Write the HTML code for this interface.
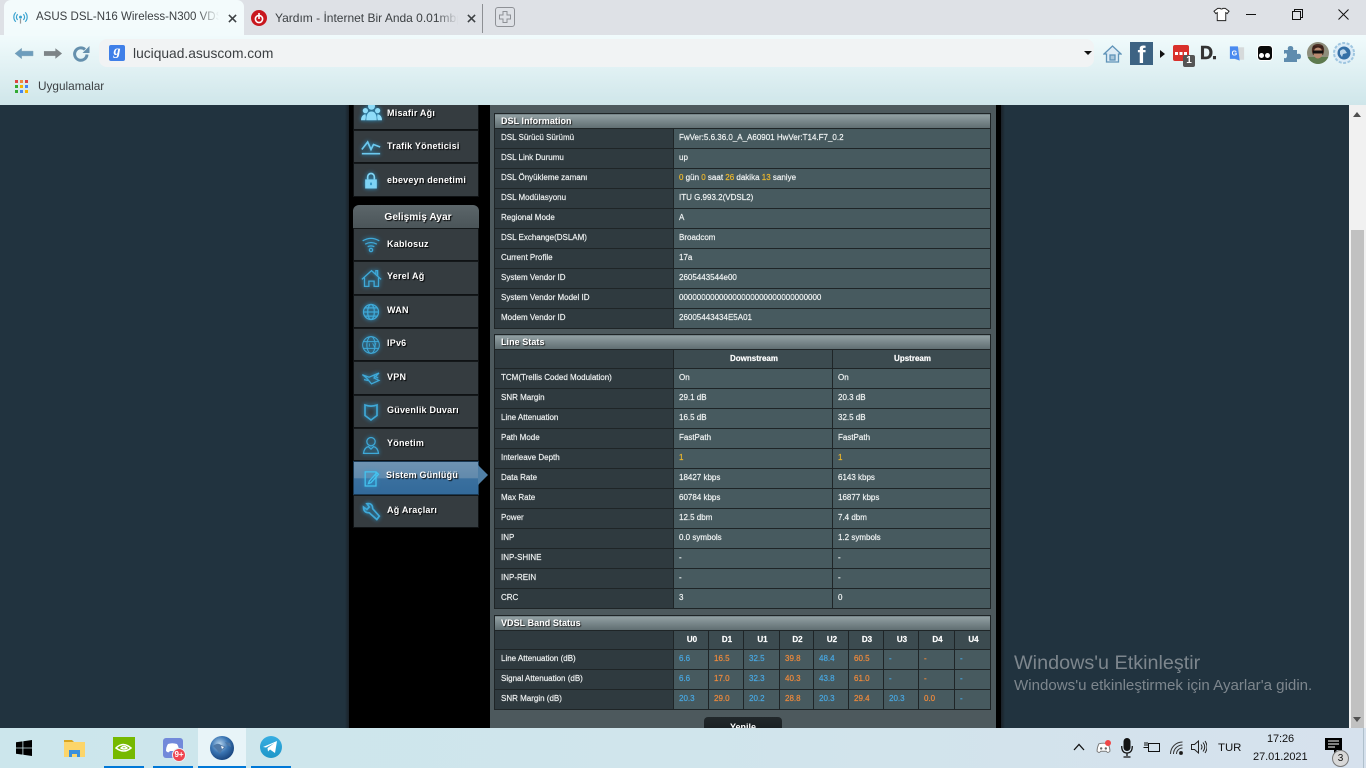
<!DOCTYPE html>
<html><head><meta charset="utf-8"><title>ASUS DSL-N16</title>
<style>
*{box-sizing:border-box}
html,body{margin:0;padding:0;width:1366px;height:768px;overflow:hidden;font-family:"Liberation Sans",sans-serif;background:#21333f}
.a{position:absolute}
.t{position:absolute;white-space:nowrap}
#tabs{left:0;top:0;width:1366px;height:35px;background:#dee1e6}
#tb{left:0;top:35px;width:1366px;height:70px;background:linear-gradient(#f1fbfc,#cfe6ea)}
#tab1{left:4px;top:0;width:240px;height:35px;background:#f3fbfc;border-radius:7px 7px 0 0}
.tabt{font-size:12px;color:#3c4043;top:11px;overflow:hidden;-webkit-mask-image:linear-gradient(90deg,#000 88%,transparent)}
#omni{left:99px;top:39px;width:995px;height:28px;background:#f1f3f4;border-radius:8px}
#black{left:349px;top:105px;width:652px;height:623px;background:#000}
#side{left:353px;top:105px;width:140px;height:423px;overflow:hidden}
.it{position:absolute;left:0;width:126px;background:#353c40;border:1px solid #0f1214;border-top:1px solid #14181a;color:#fff;font-size:9px;font-weight:bold;letter-spacing:.22px;text-shadow:1px 1px 1px #000}
.it span{position:absolute;left:33px;top:9px;white-space:nowrap}
.it svg{position:absolute;left:7px;top:6px;filter:drop-shadow(0 0 2px #2a9fd8)}
#main{left:490px;top:105px;width:506px;height:623px;background:#4d595d}
table{position:absolute;left:4px;width:497px;border-collapse:collapse;table-layout:fixed;font-size:8px;color:#f1f4f4;-webkit-text-stroke:.18px}
td,th{border:1px solid #1f2527;height:20px;padding:0 0 3px 5px;text-align:left;font-weight:normal;background:#475a5f;white-space:nowrap;overflow:hidden}
td.l,th.l{background:#2f3a3f;padding-left:6px;color:#eef1f1}
tr.h td,tr.h th{height:15px;background:linear-gradient(#93a1a4,#5e6c70);font-weight:bold;font-size:9px;color:#fff;letter-spacing:.05px;padding:0 0 0 6px;text-shadow:1px 1px 1px #222;-webkit-text-stroke:0}
tr.c th{height:19px;font-weight:bold;text-align:center;background:#3c4b50;padding:0 0 2px 2px;color:#fff}
tr.c th.l{background:#2f3a3f}
b.y{font-weight:normal;color:#f0b92b}
.bl{color:#48a8e2}.or{color:#ef8a3c}
#btn{left:214px;top:612px;width:78px;height:30px;background:linear-gradient(#22282b,#0b1315);border-radius:4px;color:#fff;font-size:9px;font-weight:bold;text-align:center;padding-top:5px}
#sb{left:1349px;top:105px;width:17px;height:623px;background:#f1f1f1}
#task{left:0;top:728px;width:1366px;height:40px;background:linear-gradient(90deg,#cce6ec,#d0e5ec 50%,#d6e1ed)}
.u{position:absolute;top:38px;height:2px;background:#0078d7}
.ic{position:absolute}
</style></head><body>

<div class="a" id="tabs"></div>
<div class="a" id="tab1"></div>
<div class="a" id="tb"></div>
<div class="a" style="left:4px;top:28px;width:240px;height:8px;background:#f2fbfc"></div>

<svg class="ic" style="left:13px;top:10px" width="15" height="16" viewBox="0 0 16 16" fill="none" stroke="#3aa3d0" stroke-width="1.3"><circle cx="8" cy="7" r="1.6" fill="#3aa3d0" stroke="none"/><path d="M5 4a4 4 0 0 0 0 6M11 4a4 4 0 0 1 0 6M3 2a7 7 0 0 0 0 10M13 2a7 7 0 0 1 0 10"/><path d="M8 9v5" stroke="#999"/></svg>
<div class="t tabt" style="left:36px;width:183px;font-size:11.5px;top:11px">ASUS DSL-N16 Wireless-N300 VDSL2 Modem</div>
<svg class="ic" style="left:228px;top:14px" width="9" height="9" viewBox="0 0 10 10" stroke="#3c4043" stroke-width="1.700"><path d="M1 1l8 8M9 1l-8 8"/></svg>
<svg class="ic" style="left:251px;top:10px" width="16" height="16" viewBox="0 0 16 16"><circle cx="8" cy="8" r="8" fill="#c8171e"/><circle cx="8" cy="9" r="3.600" fill="none" stroke="#fff" stroke-width="1.600"/><path d="M8 3v6" stroke="#fff" stroke-width="1.600"/></svg>
<div class="t tabt" style="left:275px;width:183px">Yardım - İnternet Bir Anda 0.01mbps</div>
<svg class="ic" style="left:467px;top:14px" width="9" height="9" viewBox="0 0 10 10" stroke="#3c4043" stroke-width="1.700"><path d="M1 1l8 8M9 1l-8 8"/></svg>
<div class="a" style="left:482px;top:4px;width:1px;height:29px;background:#8d9094"></div>
<svg class="ic" style="left:495px;top:7px" width="20" height="20" viewBox="0 0 20 20" fill="none" stroke="#8e9196"><rect x=".5" y=".5" width="19" height="19" rx="2.500"/><path d="M8 4.500h4v3.500h3.500v4H12v3.500H8V12H4.500V8H8z"/></svg>

<!-- window controls -->
<svg class="ic" style="left:1213px;top:7px" width="17" height="15" viewBox="0 0 18 15" fill="#fff" stroke="#222"><path d="M5 1h2.500q1.500 1.500 3 0H13l4 3-2 2.500-1.500-1V14h-9V5.500L3 6.500 1 4z"/></svg>
<div class="a" style="left:1246px;top:14px;width:10px;height:1px;background:#111"></div>
<svg class="ic" style="left:1292px;top:9px" width="11" height="11" viewBox="0 0 11 11" fill="none" stroke="#111"><rect x=".5" y="2.500" width="8" height="8"/><path d="M2.500 2.500v-2h8v8h-2"/></svg>
<svg class="ic" style="left:1338px;top:9px" width="11" height="11" viewBox="0 0 11 11" stroke="#111"><path d="M.5.500l10 10M10.500.500l-10 10"/></svg>

<!-- toolbar -->
<svg class="ic" style="left:14px;top:47px" width="20" height="13" viewBox="0 0 21 13"><path d="M1 6.500L8 1v3h12v5H8v3z" fill="#6d9dbd" stroke="#8ab" stroke-width=".5"/></svg>
<svg class="ic" style="left:43px;top:47px" width="20" height="13" viewBox="0 0 21 13"><path d="M20 6.500L13 1v3H1v5h12v3z" fill="#7d8487"/></svg>
<svg class="ic" style="left:72px;top:45px" width="18" height="18" viewBox="0 0 18 18" fill="none"><path d="M15 9.500a6.200 6.200 0 1 1-2-5" stroke="#6590ad" stroke-width="3"/><path d="M17.500 1v7h-7z" fill="#6590ad"/></svg>
<div class="a" id="omni"></div>
<div class="a" style="left:109px;top:45px;width:16px;height:16px;background:#3f7fe8;border-radius:2px;color:#fff;font:italic bold 14px 'Liberation Serif',serif;text-align:center;line-height:14px">g</div>
<div class="t" style="left:133px;top:46px;font-size:13.800px;color:#3c4043">luciquad.asuscom.com</div>
<div class="a" style="left:1084px;top:51px;border:4px solid transparent;border-top:4px solid #111;border-bottom:0"></div>
<svg class="ic" style="left:1103px;top:44px" width="19" height="19" viewBox="0 0 19 19" fill="#dcebf5" stroke="#5f93b8" stroke-width="1.300"><path d="M1 10L9.500 2 18 10h-2.500v8h-12v-8z"/><rect x="7" y="11" width="5" height="5" fill="#a9c6da"/></svg>
<div class="a" style="left:1130px;top:42px;width:23px;height:23px;background:#3d6383;color:#fff;font:bold 24px 'Liberation Sans',sans-serif;text-align:center;line-height:27px;overflow:hidden">f</div>
<div class="a" style="left:1160px;top:50px;border:4px solid transparent;border-left:5px solid #111;border-right:0"></div>
<div class="a" style="left:1173px;top:45px;width:16px;height:16px;background:#d9302b;border-radius:2px"></div>
<div class="a" style="left:1175px;top:52px;width:12px;height:3px;background:linear-gradient(90deg,#fff 0 3px,transparent 3px 4.500px,#fff 4.500px 7.500px,transparent 7.500px 9px,#fff 9px 12px)"></div>
<div class="a" style="left:1183px;top:55px;width:12px;height:12px;background:#555;border-radius:2px;color:#fff;font:bold 10px 'Liberation Sans',sans-serif;text-align:center;line-height:12px">1</div>
<div class="t" style="left:1200px;top:43px;font-size:18px;font-weight:bold;color:#333;letter-spacing:-1px;-webkit-text-stroke:.5px #333">D.</div>
<svg class="ic" style="left:1229px;top:45px" width="16" height="17" viewBox="0 0 18 18"><path d="M7 2h10v14H7z" fill="#d6dadb"/><path d="M1 1h9l2 16-5-2H1z" fill="#4a8af0"/><text x="3" y="11" font-size="8" font-weight="bold" fill="#fff" font-family="Liberation Sans">G</text></svg>
<div class="a" style="left:1258px;top:46px;width:14px;height:14px;background:#0a0a0a;border-radius:3px;box-shadow:0 0 0 1px #fff"></div>
<div class="a" style="left:1259px;top:53px;width:5px;height:5px;background:#fff;border-radius:50%"></div>
<div class="a" style="left:1265px;top:53px;width:5px;height:5px;background:#fff;border-radius:50%"></div>
<svg class="ic" style="left:1283px;top:44px" width="18" height="18" viewBox="0 0 18 18" fill="#5f8cae"><path d="M1 6h4q-1-4 2.500-4T10 6h4v4q4-1 4 2.500T14 15v3H1v-4q3 1 3-2.500T1 10z"/></svg>
<svg class="ic" style="left:1307px;top:42px" width="22" height="22" viewBox="0 0 22 22"><defs><clipPath id="av"><circle cx="11" cy="11" r="11"/></clipPath></defs><g clip-path="url(#av)"><rect width="22" height="22" fill="#8e8e7c"/><rect y="15" width="22" height="7" fill="#5d7a4e"/><path d="M5 10Q4 2 11 2t6 8l-1 3H6z" fill="#4a2c22"/><ellipse cx="11" cy="11" rx="4.500" ry="5.500" fill="#b98a70"/><rect x="6" y="8.500" width="10" height="3" fill="#111"/><path d="M6 7q5-3 10 0v-3H6z" fill="#3a2018"/></g></svg>
<svg class="ic" style="left:1333px;top:42px" width="22" height="22" viewBox="0 0 22 22"><circle cx="11" cy="11" r="10" fill="#dcecf7" stroke="#9fc6e0" stroke-width="2" stroke-dasharray="3 1.500"/><circle cx="11" cy="11" r="6.500" fill="#3570a6"/><path d="M7 9q3-3 5-1l2 3-4 1-1 3-2-3z" fill="#bcd6ea"/></svg>

<!-- bookmarks -->
<div class="a" style="left:15px;top:80px;width:13px;height:13px;background:
linear-gradient(90deg,#d44 0 3px,transparent 3px 5px,#e84 5px 8px,transparent 8px 10px,#d44 10px 13px) 0 0/13px 3px no-repeat,
linear-gradient(90deg,#3a3 0 3px,transparent 3px 5px,#f4b400 5px 8px,transparent 8px 10px,#4285f4 10px 13px) 0 5px/13px 3px no-repeat,
linear-gradient(90deg,#3a3 0 3px,transparent 3px 5px,#4285f4 5px 8px,transparent 8px 10px,#f4b400 10px 13px) 0 10px/13px 3px no-repeat"></div>
<div class="t" style="left:38px;top:79px;font-size:11.800px;color:#3c4043">Uygulamalar</div>

<!-- page -->
<div class="a" id="black"></div>
<div class="a" style="left:1001px;top:105px;width:4px;height:623px;background:linear-gradient(90deg,#1a2128,#21333f)"></div>
<div class="a" style="left:345px;top:105px;width:4px;height:623px;background:linear-gradient(90deg,#21333f,#1a2128)"></div>

<div class="a" id="side">
<div class="it" style="top:-8px;height:33px"><span style="top:10px">Misafir Ağı</span><svg style="top:3px" width="21" height="21" viewBox="0 0 24 24" fill="#8fdcf8"><circle cx="12" cy="6" r="4"/><circle cx="5" cy="11" r="3"/><circle cx="19" cy="11" r="3"/><path d="M6 22q0-10 6-10t6 10zM0 22q0-6 5-7 1 2 0 7zM24 22q0-6-5-7-1 2 0 7z"/></svg></div>
<div class="it" style="top:25px;height:33px"><span style="top:10px">Trafik Yöneticisi</span><svg width="20" height="20" viewBox="0 0 24 24" fill="none" stroke="#6cc9ef" stroke-width="2"><path d="M1 15L8 6l4 9 3-6 8 3M1 20h22"/></svg></div>
<div class="it" style="top:58px;height:34px"><span style="top:11px">ebeveyn denetimi</span><svg width="20" height="22" viewBox="0 0 24 24" fill="#7fd4f5"><path d="M7 10V7a5 5 0 0 1 10 0v3h-2V7a3 3 0 0 0-6 0v3z"/><path fill-rule="evenodd" d="M5 10h14v11H5zM11 14v3h2v-3z"/></svg></div>

<div class="a" style="left:0;top:100px;width:126px;height:24px;background:linear-gradient(#5c666a,#4a5458);border-radius:6px 6px 0 0;color:#fff;font-size:10.200px;font-weight:bold;text-align:center;line-height:25px;padding-left:4px;text-shadow:1px 1px 1px #000">Gelişmiş Ayar</div>

<div class="it" style="top:123px;height:33px"><span style="top:10px">Kablosuz</span><svg width="20" height="20" viewBox="0 0 24 24" fill="none" stroke="#3fa9d8" stroke-width="1.500"><path d="M2 7q10-6 20 0M5 11q7-4 14 0M8 14q4-2 8 0"/><circle cx="12" cy="18" r="2"/></svg></div>
<div class="it" style="top:156px;height:34px"><span>Yerel Ağ</span><svg width="21" height="21" viewBox="0 0 24 24" fill="none" stroke="#3fa9d8" stroke-width="1.500"><path d="M1 13L12 3l11 10M4 11v10h5v-6h6v6h5V11M17 7V3h2v6"/></svg></div>
<div class="it" style="top:190px;height:33px"><span>WAN</span><svg width="20" height="20" viewBox="0 0 24 24" fill="none" stroke="#3fa9d8" stroke-width="1.500"><circle cx="12" cy="12" r="9"/><ellipse cx="12" cy="12" rx="4" ry="9"/><path d="M3 12h18M4.500 7h15M4.500 17h15"/></svg></div>
<div class="it" style="top:223px;height:33px"><span>IPv6</span><svg width="20" height="20" viewBox="0 0 24 24" fill="none" stroke="#3fa9d8" stroke-width="1.200"><circle cx="12" cy="12" r="10"/><ellipse cx="12" cy="12" rx="5" ry="10"/><path d="M3 8h18M3 16h18"/><path d="M7 10v4M10 10v4M14 10l2 4 2-4" stroke-width="1"/></svg></div>
<div class="it" style="top:256px;height:34px"><span style="top:10px">VPN</span><svg width="21" height="20" viewBox="0 0 24 24" fill="none" stroke="#3fa9d8" stroke-width="1.500"><path d="M1 8l8 3 12-5-6 6 6 3-9 4-6-7z"/><path d="M3 14l5 1M14 9l6 3"/></svg></div>
<div class="it" style="top:290px;height:33px"><span>Güvenlik Duvarı</span><svg style="left:8px" width="18" height="21" viewBox="0 0 24 24" fill="none" stroke="#3fa9d8" stroke-width="2.200"><path d="M4 2q8 3 16 0v14l-8 6-8-6z"/></svg></div>
<div class="it" style="top:323px;height:33px"><span>Yönetim</span><svg width="20" height="20" viewBox="0 0 24 24" fill="none" stroke="#3fa9d8" stroke-width="1.500"><circle cx="12" cy="8" r="5"/><path d="M3 22q1-7 6-8l3 3 3-3q5 1 6 8z"/></svg></div>
<div class="it" style="top:356px;height:34px;background:linear-gradient(#6e93b2 0,#628aac 50%,#3a709f 52%,#336a9a);border-color:#1a3a55"><span style="left:32px;top:8px">Sistem Günlüğü</span><svg width="20" height="21" viewBox="0 0 24 24" fill="none" stroke="#45c4f0" stroke-width="1.500"><path d="M5 4h13v17H5z"/><path d="M10 15l9-10 2 2-9 10-3 1z"/></svg></div>
<div class="a" style="left:125px;top:360px;border:10px solid transparent;border-left:10px solid #4f7fa6;border-right:0"></div>
<div class="it" style="top:390px;height:33px"><span>Ağ Araçları</span><svg width="20" height="20" viewBox="0 0 24 24" fill="none" stroke="#3fa9d8" stroke-width="2"><path d="M3 6l4 3 3-3-3-4q7-1 7 6l8 9-3 4-9-8q-7 0-7-7z"/></svg></div>
</div>

<div class="a" id="main">
<table style="top:8px">
<colgroup><col style="width:179px"><col></colgroup>
<tr class="h"><td colspan="2">DSL Information</td></tr>
<tr><td class="l">DSL Sürücü Sürümü</td><td>FwVer:5.6.36.0_A_A60901 HwVer:T14.F7_0.2</td></tr>
<tr><td class="l">DSL Link Durumu</td><td>up</td></tr>
<tr><td class="l">DSL Önyükleme zamanı</td><td><b class="y">0</b> gün <b class="y">0</b> saat <b class="y">26</b> dakika <b class="y">13</b> saniye</td></tr>
<tr><td class="l">DSL Modülasyonu</td><td>ITU G.993.2(VDSL2)</td></tr>
<tr><td class="l">Regional Mode</td><td>A</td></tr>
<tr><td class="l">DSL Exchange(DSLAM)</td><td>Broadcom</td></tr>
<tr><td class="l">Current Profile</td><td>17a</td></tr>
<tr><td class="l">System Vendor ID</td><td>2605443544e00</td></tr>
<tr><td class="l">System Vendor Model ID</td><td>00000000000000000000000000000000</td></tr>
<tr><td class="l">Modem Vendor ID</td><td>26005443434E5A01</td></tr>
</table>

<table style="top:229px">
<colgroup><col style="width:179px"><col style="width:159px"><col></colgroup>
<tr class="h"><td colspan="3">Line Stats</td></tr>
<tr class="c"><th class="l"></th><th>Downstream</th><th>Upstream</th></tr>
<tr><td class="l">TCM(Trellis Coded Modulation)</td><td>On</td><td>On</td></tr>
<tr><td class="l">SNR Margin</td><td>29.1 dB</td><td>20.3 dB</td></tr>
<tr><td class="l">Line Attenuation</td><td>16.5 dB</td><td>32.5 dB</td></tr>
<tr><td class="l">Path Mode</td><td>FastPath</td><td>FastPath</td></tr>
<tr><td class="l">Interleave Depth</td><td><b class="y">1</b></td><td><b class="y">1</b></td></tr>
<tr><td class="l">Data Rate</td><td>18427 kbps</td><td>6143 kbps</td></tr>
<tr><td class="l">Max Rate</td><td>60784 kbps</td><td>16877 kbps</td></tr>
<tr><td class="l">Power</td><td>12.5 dbm</td><td>7.4 dbm</td></tr>
<tr><td class="l">INP</td><td>0.0 symbols</td><td>1.2 symbols</td></tr>
<tr><td class="l">INP-SHINE</td><td>-</td><td>-</td></tr>
<tr><td class="l">INP-REIN</td><td>-</td><td>-</td></tr>
<tr><td class="l">CRC</td><td>3</td><td>0</td></tr>
</table>

<table style="top:510px">
<colgroup><col style="width:179px"><col style="width:35px"><col style="width:35px"><col style="width:36px"><col style="width:34px"><col style="width:35px"><col style="width:35px"><col style="width:35px"><col style="width:36px"><col></colgroup>
<tr class="h"><td colspan="10">VDSL Band Status</td></tr>
<tr class="c"><th class="l"></th><th>U0</th><th>D1</th><th>U1</th><th>D2</th><th>U2</th><th>D3</th><th>U3</th><th>D4</th><th>U4</th></tr>
<tr><td class="l">Line Attenuation (dB)</td><td class="bl">6.6</td><td class="or">16.5</td><td class="bl">32.5</td><td class="or">39.8</td><td class="bl">48.4</td><td class="or">60.5</td><td class="bl">-</td><td class="or">-</td><td class="bl">-</td></tr>
<tr><td class="l">Signal Attenuation (dB)</td><td class="bl">6.6</td><td class="or">17.0</td><td class="bl">32.3</td><td class="or">40.3</td><td class="bl">43.8</td><td class="or">61.0</td><td class="bl">-</td><td class="or">-</td><td class="bl">-</td></tr>
<tr><td class="l">SNR Margin (dB)</td><td class="bl">20.3</td><td class="or">29.0</td><td class="bl">20.2</td><td class="or">28.8</td><td class="bl">20.3</td><td class="or">29.4</td><td class="bl">20.3</td><td class="or">0.0</td><td class="bl">-</td></tr>
</table>
<div class="a" id="btn">Yenile</div>
</div>

<!-- watermark -->
<div class="t" style="left:1014px;top:652px;font-size:19.800px;color:#7d868d">Windows'u Etkinleştir</div>
<div class="t" style="left:1014px;top:677px;font-size:15.100px;color:#7d868d">Windows'u etkinleştirmek için Ayarlar'a gidin.</div>

<!-- scrollbar -->
<div class="a" id="sb">
<div class="a" style="left:4px;top:7px;border:4.500px solid transparent;border-bottom:5px solid #505050;border-top:0"></div>
<div class="a" style="left:2px;top:125px;width:13px;height:524px;background:#c1c1c1"></div>
<div class="a" style="left:4px;top:612px;border:4px solid transparent;border-top:5px solid #505050;border-bottom:0"></div>
</div>

<!-- taskbar -->
<div class="a" id="task">
<div class="a" style="left:198px;top:0;width:48px;height:40px;background:#e8f4f8"></div>
<div class="u" style="left:104px;width:40px"></div>
<div class="u" style="left:153px;width:40px"></div>
<div class="u" style="left:198px;width:48px"></div>
<div class="u" style="left:251px;width:40px"></div>
<svg class="ic" style="left:16px;top:12px" width="16" height="16" viewBox="0 0 16 16" fill="#000"><path d="M0 2.300l6.500-.9v6.200H0zM7.300 1.300L16 0v7.600H7.300zM0 8.400h6.500v6.200L0 13.700zM7.300 8.400H16V16l-8.700-1.200z"/></svg>
<svg class="ic" style="left:64px;top:11px" width="21" height="19" viewBox="0 0 21 19"><path d="M0 1h8l2 2h-10z" fill="#d9a520"/><path d="M0 3h21v15H0z" fill="#fcd56a"/><path d="M5 18v-7h11v7h-3v-3H8v3z" fill="#3a90dc"/></svg>
<div class="a" style="left:113px;top:9px;width:22px;height:22px;background:#76b900"></div>
<svg class="ic" style="left:115px;top:13px" width="18" height="13" viewBox="0 0 18 13" fill="none" stroke="#fff" stroke-width="1.500"><path d="M1 7q7-7 15 0-7 6-15 0zM6 7q3-3 6 0-3 2-6 0z"/></svg>
<div class="a" style="left:163px;top:10px;width:20px;height:20px;background:#7289da;border-radius:3px"></div>
<svg class="ic" style="left:166px;top:15px" width="13" height="10" viewBox="0 0 13 10" fill="#fff"><path d="M2 1q4-1.500 9 0 2 3 2 7-2 2-3 1l-1-1H4L3 9Q2 10 0 8q0-4 2-7z"/></svg>
<div class="a" style="left:172px;top:20px;width:14px;height:14px;background:#f0444f;border-radius:50%;border:1px solid #e8eef2;color:#fff;font-size:8px;font-weight:bold;text-align:center;line-height:12px">9+</div>
<svg class="ic" style="left:210px;top:8px" width="24" height="24" viewBox="0 0 24 24"><defs><radialGradient id="gl" cx=".4" cy=".35" r=".7"><stop offset="0" stop-color="#b9d6ee"/><stop offset=".5" stop-color="#3b76b4"/><stop offset="1" stop-color="#153f78"/></radialGradient></defs><circle cx="12" cy="12" r="12" fill="url(#gl)"/><path d="M3 10q5-4 8-1l5 2-4 3-2 4-3-4zM15 6l5 1 1 4-4-2z" fill="#4f78a6"/><path d="M11 10l3 1-2 2z" fill="#fff"/></svg>
<div class="a" style="left:260px;top:8px;width:22px;height:22px;border-radius:50%;background:linear-gradient(#37aee2,#1e96c8)"></div>
<svg class="ic" style="left:263px;top:13px" width="15" height="13" viewBox="0 0 15 13" fill="#fff"><path d="M0 6L14 0l-2 12-5-3.500-2 2-.5-3.500 7-5-8.500 4.500z"/></svg>

<svg class="ic" style="left:1073px;top:15px" width="12" height="8" viewBox="0 0 12 8" fill="none" stroke="#111" stroke-width="1.300"><path d="M1 7l5-5.500L11 7"/></svg>
<svg class="ic" style="left:1095px;top:14px" width="17" height="12" viewBox="0 0 16 13"><path d="M3 2q5-1.500 10 0 2 4 2 8-2 2-3 1l-1-1H5l-1 1q-1 1-3-1 0-4 2-8z" fill="#fff" stroke="#777"/><circle cx="5.500" cy="7" r="1.300" fill="#666"/><circle cx="10.500" cy="7" r="1.300" fill="#666"/></svg>
<div class="a" style="left:1105px;top:12px;width:6px;height:6px;border-radius:50%;background:#f04747"></div>
<svg class="ic" style="left:1121px;top:10px" width="12" height="20" viewBox="0 0 12 20"><rect x="2.500" y="0" width="7" height="13" rx="3.500" fill="#111"/><path d="M.7 8q0 7 5.300 7t5.300-7M6 15v3M2.500 19h7" fill="none" stroke="#111" stroke-width="1.300"/></svg>
<svg class="ic" style="left:1143px;top:12px" width="17" height="14" viewBox="0 0 17 14" fill="none" stroke="#111"><rect x="5.500" y="3.500" width="11" height="8"/><path d="M.5 7.500h5M2 2v4M4 2v4"/></svg>
<svg class="ic" style="left:1170px;top:13px" width="14" height="14" viewBox="0 0 14 14" fill="none" stroke="#333"><path d="M.5 13a12 12 0 0 1 12-12M3.500 13a9 9 0 0 1 9-9M6.500 13a6 6 0 0 1 6-6"/><circle cx="11" cy="12" r="1.500" fill="#111"/></svg>
<svg class="ic" style="left:1191px;top:12px" width="16" height="14" viewBox="0 0 16 14" fill="none" stroke="#222"><path d="M.5 4.500h3L7.500 1v12l-4-3.500h-3z"/><path d="M10 4.500q2 2.500 0 5M12 2.500q3.500 4.500 0 9M14 1q4 6 0 12"/></svg>
<div class="t" style="left:1218px;top:14px;font-size:11.400px;color:#111">TUR</div>
<div class="t" style="left:1267px;top:5px;font-size:11px;color:#111;letter-spacing:-.1px">17:26</div>
<div class="t" style="left:1253px;top:23px;font-size:11px;color:#111;letter-spacing:-.05px">27.01.2021</div>
<svg class="ic" style="left:1325px;top:10px" width="17" height="16" viewBox="0 0 17 16"><path d="M0 0h17v12h-5l-3 3v-3H0z" fill="#000"/><path d="M3 3h11M3 6h11M3 9h7" stroke="#fff"/></svg>
<div class="a" style="left:1332px;top:22px;width:17px;height:17px;border-radius:50%;background:#d8d8d8;border:1px solid #777;color:#111;font-size:10px;text-align:center;line-height:15px">3</div>
<div class="a" style="left:1363px;top:0;width:1px;height:40px;background:#b0c0cc"></div>
</div>
</body></html>
